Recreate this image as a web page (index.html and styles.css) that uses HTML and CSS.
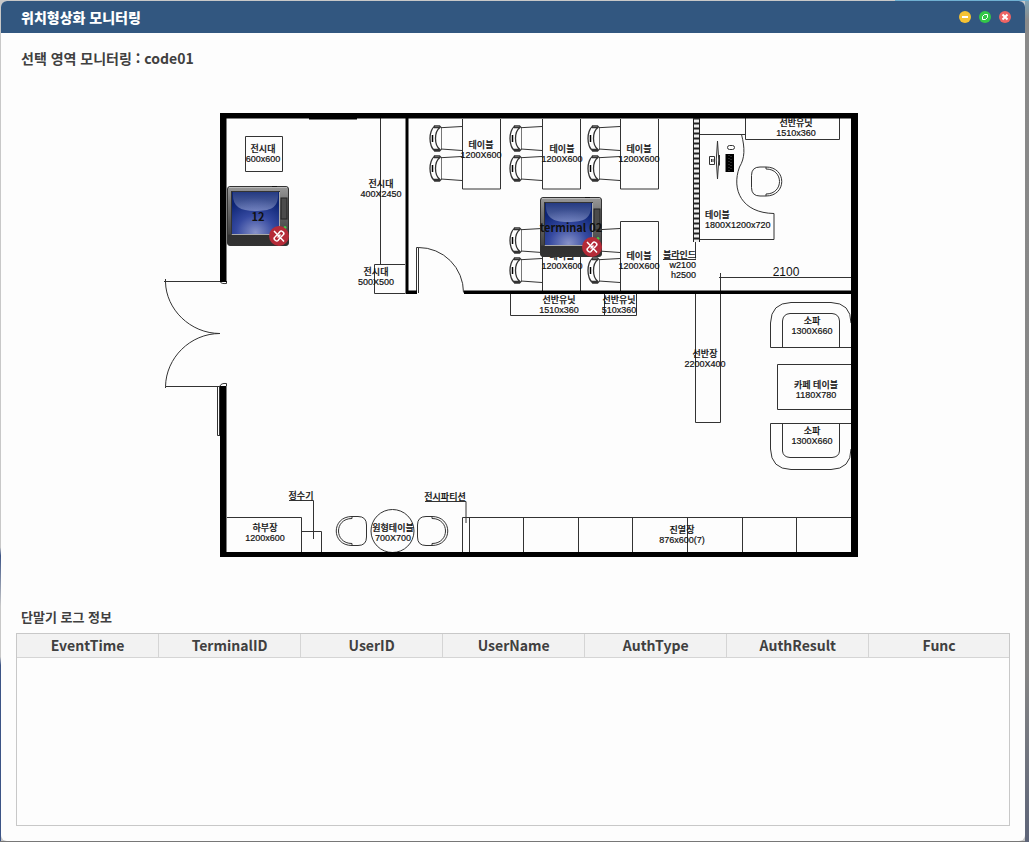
FILE: index.html
```html
<!DOCTYPE html>
<html lang="ko">
<head>
<meta charset="utf-8">
<title>위치형상화 모니터링</title>
<link rel="stylesheet" href="styles.css">
</head>
<body>
<main class="window">
  <header class="titlebar">
    <h1 class="titlebar-text">위치형상화 모니터링</h1>
    <div class="controls">
      <button class="control minimize" type="button" aria-label="최소화"><svg viewBox="0 0 12 12"><path d="M3 6H9" stroke-width="2"/></svg></button>
      <button class="control maximize" type="button" aria-label="최대화"><svg viewBox="0 0 12 12"><path d="M5.500 3.500H8.500V6.500M6.500 8.500H3.500V5.500M3.500 5.500L5.500 3.500M8.500 6.500L6.500 8.500" stroke-width="1"/></svg></button>
      <button class="control close" type="button" aria-label="닫기"><svg viewBox="0 0 12 12"><path d="M3.500 3.500L8.500 8.500M8.500 3.500L3.500 8.500" stroke-width="2"/></svg></button>
    </div>
  </header>

  <h2 class="area-title">선택 영역 모니터링 : code01</h2>

  <section class="map" aria-label="평면도">
    <svg class="plan" viewBox="161 100 704 464">
      <defs>
        <g id="chair">
          <path d="M6 1.500C2.500 2.500 1 9 1 13.500S2.500 24.500 6 25.500M11 2.500C7.500 5 6.500 9 6.500 13.500S7.500 22 11 24.500M5 .8H10.500L12 2.500M5 26H10.500L12 24.500M5 .8L5.500 2.500H11M5 26L5.500 24.500H11" stroke-width="1.300"/>
          <path d="M3.500 10V17" stroke="#000" stroke-width="1.500"/>
          <path d="M12.500 2V25" stroke="#777"/>
          <path d="M12 2.700L33 1.500M12 24L33 25.500" />
        </g>
        <g id="armchair">
          <path d="M15 .5H9Q.5 .5 .5 9V21Q.5 29.500 9 29.500H15M15 .5C36 .5 36 29.500 15 29.500"/>
          <path d="M15 .5V2.500C33 2.500 33 27.500 15 27.500V29.500"/>
        </g>
        <pattern id="ladder" x="693" y="118" width="7" height="5" patternUnits="userSpaceOnUse">
          <rect width="7" height="5" fill="#222"/><rect x="1" y="1.500" width="5" height="3" fill="#eee"/>
        </pattern>
      </defs>

      <g class="line">
        <path d="M245.500 136.500H282.500V171.500H245.500ZM380.500 118V264M405 264.500H374.500V293.500H405"/>
        <path d="M416.500 247.500H418.500V293M416.500 247.500V293M418.500 247.500A45 45 0 0 1 463.500 292.500"/>
        <path d="M164 281.500H226M165.500 279V282C166 309 190 333.500 220 333.500C190 333.500 166 358 165.500 386.500V388M165.500 386.500H226M220 281.500Q221 284 226.500 283.500V281M220 386Q221 383 226.500 383.500V386M217.500 387V435.500H220M219.500 387V435"/>
        <path d="M462.500 119V189H500.500V119M542.500 119V189H580.500V119M620.500 119V189H658.500V119M542.500 292V221.500H580.500V292M620.500 292V221.500H658.500V292"/>
        <use href="#chair" x="429" y="125"/><use href="#chair" x="429" y="155"/>
        <use href="#chair" x="509" y="125"/><use href="#chair" x="509" y="155"/>
        <use href="#chair" x="587" y="125"/><use href="#chair" x="587" y="155"/>
        <use href="#chair" x="509" y="227"/><use href="#chair" x="509" y="257"/>
        <use href="#chair" x="587" y="227"/><use href="#chair" x="587" y="257"/>
        <path d="M510.500 294V315.500H636.500V294M604.500 294V315M745.500 118V139.500H839.500V118"/>
        <path d="M700 134.500H741.500C745 148 745 158 739.500 167C731 190 742 213 774 213.500V239.500H700M700 134.500H745"/>
        <path d="M695.500 241V258.500M663 259.500H696"/>
        <path d="M717.500 141Q715 160 717.500 179Q720 160 717.500 141ZM709.500 156.500H714.500V164.500H709.500ZM711.500 159V162M713 159V162M719.500 155V165.500"/>
        <rect x="727.500" y="145.500" width="7" height="4" rx="2"/>
        <path d="M720.500 273V422.500H695.500V294M719 277.500H851"/>
        <use href="#armchair" x="751" y="166.500"/>
        <use href="#armchair" x="417" y="516"/>
        <use href="#armchair" transform="translate(367 516) scale(-1 1)"/>
        <path d="M851 347.500H770.500V323Q771 303 791 302.500H831Q851 303 851 323M782.500 347V321Q783 314 790 313.500H832Q839 314 839.500 321V347"/>
        <path d="M851 364.500H777.500V409.500H851"/>
        <path d="M851 423.500H770.500V449Q771 469 791 469.500H831Q851 469 851 449M782.500 424V451Q783 457 790 457.500H832Q839 457 839.500 451V424"/>
        <path d="M227 517.500H301.500V552M301 531.500H321.500V552M313.500 539V500.500H289M425 501.500H466V523"/>
        <circle cx="392.500" cy="531" r="21.500"/>
        <path d="M851 517.500H462.500V552M469.500 517V552M523.500 517V552M578.500 517V552M632.500 517V552M687.500 517V552M742.500 517V552M796.500 517V552"/>
      </g>

      <path class="wall" d="M220 113H858V557H220V386H226.500V552H851V294H464V290.500H851V118.500H408.500V290.500H417V294H405.500V118.500H226.500V282H220Z"/>
      <path class="wall" d="M309 118H357V119.500H309ZM725.500 154H734V172H725.500Z"/>
      <path d="M729 155V171M731 156V170" stroke="#555" stroke-dasharray="1 2"/>
      <rect x="693" y="118" width="7" height="124" fill="url(#ladder)"/>

      <g class="caption">
        <text x="263" y="152">전시대</text><text x="263" y="162">600x600</text>
        <text x="381" y="187">전시대</text><text x="381" y="197">400X2450</text>
        <text x="376" y="275">전시대</text><text x="376" y="285">500X500</text>
        <text x="481" y="148">테이블</text><text x="481" y="158">1200X600</text>
        <text x="562" y="152">테이블</text><text x="562" y="162">1200X600</text>
        <text x="639" y="152">테이블</text><text x="639" y="162">1200X600</text>
        <text x="562" y="259">테이블</text><text x="562" y="269">1200X600</text>
        <text x="639" y="259">테이블</text><text x="639" y="269">1200X600</text>
        <text x="559" y="303">선반유닛</text><text x="559" y="313">1510x360</text>
        <text x="619" y="303">선반유닛</text><text x="619" y="313">510x360</text>
        <text x="796" y="126">선반유닛</text><text x="796" y="136">1510x360</text>
        <text class="start" x="705" y="218">테이블</text><text class="start" x="705" y="228">1800X1200x720</text>
        <text class="end" x="696" y="258">블라인드</text><text class="end" x="696" y="268">w2100</text><text class="end" x="696" y="278">h2500</text>
        <text class="dimension" x="786" y="276">2100</text>
        <text x="705" y="357">선반장</text><text x="705" y="367">2200X400</text>
        <text x="812" y="324">소파</text><text x="812" y="334">1300X660</text>
        <text x="816" y="388">카페 테이블</text><text x="816" y="398">1180X780</text>
        <text x="812" y="434">소파</text><text x="812" y="444">1300X660</text>
        <text x="301" y="499">정수기</text><text x="445" y="500">전시파티션</text>
        <text x="265" y="531">하부장</text><text x="265" y="541">1200x600</text>
        <text x="393" y="531">원형테이블</text><text x="393" y="541">700X700</text>
        <text x="682" y="533">진열장</text><text x="682" y="543">876x600(7)</text>
      </g>
    </svg>

    <button class="terminal terminal-a" type="button">
      <svg class="device" viewBox="0 0 62 60">
        <defs>
          <linearGradient id="case" x2="0" y2="1"><stop stop-color="#999"/><stop offset=".25" stop-color="#777"/><stop offset=".8" stop-color="#444"/><stop offset=".83" stop-color="#303030"/><stop offset="1" stop-color="#333"/></linearGradient>
          <radialGradient id="screen" cy=".95" r=".8"><stop stop-color="#8792c8"/><stop offset=".5" stop-color="#3549a0"/><stop offset="1" stop-color="#0c2474"/></radialGradient>
          <linearGradient id="gloss" x2="0" y2="1"><stop stop-color="#fff" stop-opacity=".1"/><stop offset="1" stop-color="#dfe8ff" stop-opacity=".38"/></linearGradient>
        </defs>
        <rect x=".5" y=".5" width="61" height="59" rx="2.500" fill="url(#case)" stroke="#333"/>
        <path d="M45 .5H50" stroke="#111" stroke-width="1.500"/>
        <path d="M2 1.500H60" stroke="#bbb"/>
        <rect x="4.500" y="5.500" width="48" height="43" fill="url(#screen)" stroke="#333"/>
        <path d="M5 48V48.500H52.500V6" fill="none" stroke="#aaa"/>
        <path d="M6 6H51C52 22 44 25 28 25S5 20 6 6Z" fill="url(#gloss)"/>
        <rect x="54" y="12" width="6" height="21" fill="#4b4b4b" stroke="#222"/>
        <circle cx="58" cy="41.500" r="1.500" fill="#48c848"/>
      </svg>
      <span class="terminal-name">12</span>
      <svg class="badge" viewBox="0 0 20 20"><circle cx="10" cy="10" r="10"/><path d="M9 8L11 5.500Q12 4.500 13.500 5.500L14.500 6.500Q15.500 8 14 9L12 11M11 12L9 14.500Q8 15.500 6.500 14.500L5.500 13.500Q4.500 12 6 11L8 9M8.500 11.500L11.500 8.500M5 5L15 15.500"/></svg>
    </button>
    <button class="terminal terminal-b" type="button">
      <svg class="device" viewBox="0 0 62 60">
        <rect x=".5" y=".5" width="61" height="59" rx="2.500" fill="url(#case)" stroke="#333"/>
        <path d="M45 .5H50" stroke="#111" stroke-width="1.500"/>
        <path d="M2 1.500H60" stroke="#bbb"/>
        <rect x="4.500" y="5.500" width="48" height="43" fill="url(#screen)" stroke="#333"/>
        <path d="M5 48V48.500H52.500V6" fill="none" stroke="#aaa"/>
        <path d="M6 6H51C52 22 44 25 28 25S5 20 6 6Z" fill="url(#gloss)"/>
        <rect x="54" y="12" width="6" height="21" fill="#4b4b4b" stroke="#222"/>
        <circle cx="58" cy="41.500" r="1.500" fill="#48c848"/>
      </svg>
      <span class="terminal-name">terminal 02</span>
      <svg class="badge" viewBox="0 0 20 20"><circle cx="10" cy="10" r="10"/><path d="M9 8L11 5.500Q12 4.500 13.500 5.500L14.500 6.500Q15.500 8 14 9L12 11M11 12L9 14.500Q8 15.500 6.500 14.500L5.500 13.500Q4.500 12 6 11L8 9M8.500 11.500L11.500 8.500M5 5L15 15.500"/></svg>
    </button>
  </section>

  <h2 class="log-title" id="log-title">단말기 로그 정보</h2>
  <div class="log">
    <table class="log-table" aria-labelledby="log-title">
      <thead>
        <tr><th>EventTime</th><th>TerminalID</th><th>UserID</th><th>UserName</th><th>AuthType</th><th>AuthResult</th><th>Func</th></tr>
      </thead>
      <tbody></tbody>
    </table>
  </div>
</main>
</body>
</html>
```

FILE: styles.css
```css
* {
  box-sizing: border-box;
}

body {
  margin: 0;
  min-height: 100vh;
  display: flex;
  padding: 1px 4px 1px 1px;
  font-family: "Noto Sans CJK KR", sans-serif;
  color: #404040;
  background:
    linear-gradient(90deg, transparent 87%, #6fb0d2 87%) top / 100% 1px no-repeat,
    linear-gradient(#7fa5b8 0, #8a8a8a 20px, #858585 80%, #5d6478 100%) right / 4px 100% no-repeat,
    linear-gradient(#777, #777) bottom / 100% 1px no-repeat,
    linear-gradient(#c8c8c8 65%, #c8c8c8 65%, #3c5486 66%, #c8c8c8 72%, #c8c8c8 78%, #3c5486 79%) left / 1px 100% no-repeat,
    #c8c8c8;
}

.window {
  flex: 1;
  min-width: 0;
  display: flex;
  flex-direction: column;
  background: #fdfdfd;
  border-radius: 6px;
  overflow: hidden;
}

.titlebar {
  display: flex;
  align-items: center;
  justify-content: space-between;
  height: 32px;
  padding: 0 14px 0 20px;
  background: #325780;
}

.titlebar-text {
  margin: 0;
  font-size: 14px;
  line-height: 20px;
  font-weight: 900;
  color: #fff;
}

.controls {
  display: flex;
  gap: 8px;
}

.control {
  width: 12px;
  height: 12px;
  padding: 0;
  border: 0;
  border-radius: 50%;
}

.control svg {
  display: block;
  fill: none;
  stroke: #fff;
}

.minimize {
  background: #f6c233;
}

.maximize {
  background: #33c748;
}

.close {
  background: #ee6464;
}

.area-title {
  margin: 15px 20px 31px;
  font-size: 14px;
  line-height: 21px;
  font-weight: 700;
}

.map {
  position: relative;
  width: 704px;
  max-width: 100%;
  margin: 0 auto;
}

.plan {
  display: block;
  width: 100%;
}

.line {
  fill: none;
  stroke: #333;
}

.wall {
  fill: #000;
}

.caption {
  font: 9px "Liberation Sans", "Noto Sans CJK KR", sans-serif;
  font-weight: 500;
  text-anchor: middle;
  fill: #111;
  stroke: #111;
  stroke-width: 0.2;
}

.caption .start {
  text-anchor: start;
}

.caption .end {
  text-anchor: end;
}

.caption .dimension {
  font-size: 12px;
  stroke: none;
}

.terminal {
  position: absolute;
  display: grid;
  grid-template: 100% / 100%;
  place-items: center;
  width: 62px;
  height: 60px;
  padding: 0;
  border: 0;
  background: none;
  font: 700 11px/18px "Noto Sans CJK KR", sans-serif;
  color: #111;
  white-space: nowrap;
}

.terminal-a {
  left: 66px;
  top: 86px;
}

.terminal-b {
  left: 379px;
  top: 97px;
}

.device,
.terminal-name {
  grid-area: 1 / 1;
}

.device {
  width: 100%;
}

.terminal-name {
  z-index: 1;
}

.badge {
  position: absolute;
  right: 0;
  bottom: 0;
  width: 20px;
  height: 20px;
  z-index: 2;
  fill: none;
  stroke: #fff;
  stroke-width: 1.5;
}

.badge circle {
  fill: #b52b38;
  stroke: none;
}

.log-title {
  margin: 43px 20px 6px;
  font-size: 13px;
  line-height: 20px;
  font-weight: 700;
}

.log {
  flex: 1;
  min-height: 100px;
  margin: 0 15px;
  margin-bottom: 15px;
  border: 1px solid #c8c8c8;
}

.log-table {
  width: 100%;
  table-layout: fixed;
  border-collapse: separate;
  border-spacing: 0;
}

.log-table th {
  width: 14.32%;
  height: 24px;
  padding: 0 0 2px;
  border-right: 1px solid #d5d5d5;
  border-bottom: 1px solid #d5d5d5;
  background: #f2f2f2;
  font-size: 14px;
  line-height: 20px;
  font-weight: 700;
}

.log-table th:last-child {
  width: auto;
  border-right: 0;
}
```
